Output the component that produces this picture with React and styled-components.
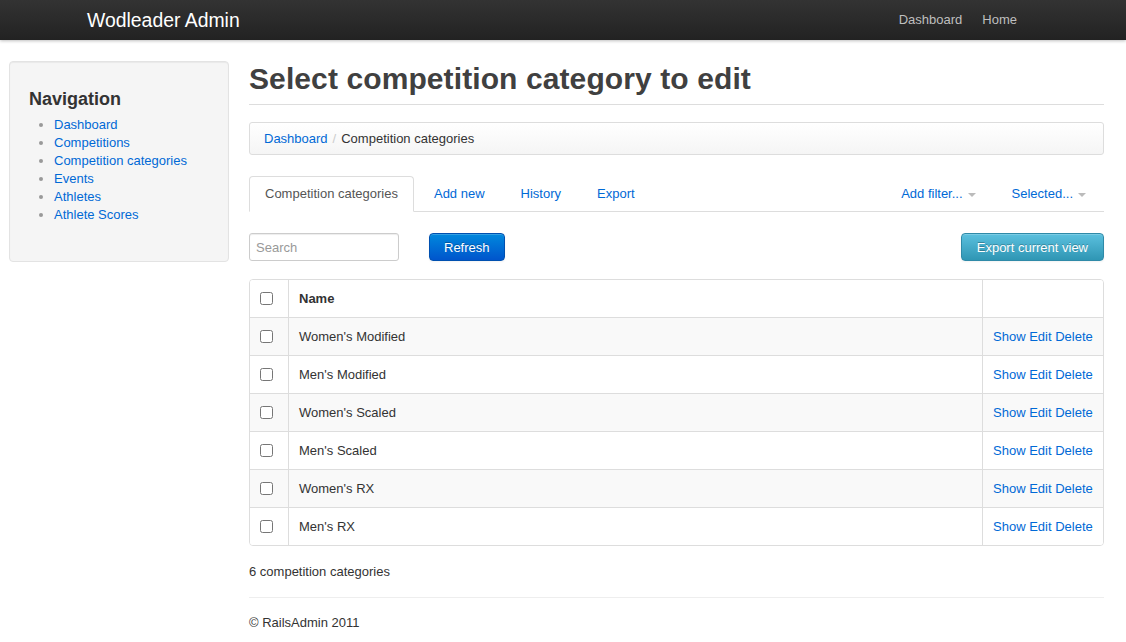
import React from 'react';
import styled, { createGlobalStyle } from 'styled-components';

const GlobalStyle = createGlobalStyle`
  body {
    margin: 0;
    background: #fff;
    font-family: "Liberation Sans", Arial, sans-serif;
    font-size: 13px;
    line-height: 18px;
    color: #333;
  }
  a { color: #0069d6; text-decoration: none; }
`;

const NavBar = styled.div`
  height: 40px;
  background: linear-gradient(to bottom, #333333, #222222);
  box-shadow: 0 1px 3px rgba(0, 0, 0, 0.25);
  display: flex;
  align-items: center;
  justify-content: space-between;
  padding: 0 109px 0 87px;
`;

const Brand = styled.span`
  color: #fff;
  font-size: 19.4px;
  line-height: 20px;
`;

const TopLinks = styled.div`
  display: flex;
  gap: 20px;
`;

const TopLink = styled.a`
  && { color: #bfbfbf; }
  font-size: 13px;
`;

const Page = styled.div`
  display: flex;
  gap: 20px;
  padding: 21px 22px 0 9px;
`;

const Sidebar = styled.div`
  width: 220px;
  flex: none;
`;

const Well = styled.div`
  background: #f5f5f5;
  border: 1px solid #e3e3e3;
  border-radius: 4px;
  box-shadow: inset 0 1px 1px rgba(0, 0, 0, 0.05);
  padding: 26px 19px 36px;
  box-sizing: border-box;
  height: 201px;
`;

const NavTitle = styled.h3`
  margin: 0 0 6px;
  font-size: 18px;
  line-height: 22px;
  font-weight: bold;
  color: #333;
`;

const NavList = styled.ul`
  margin: 0;
  padding-left: 25px;
  li::marker { color: #999; }
`;

const Main = styled.div`
  flex: 1;
  min-width: 0;
`;

const Title = styled.h1`
  margin: 0;
  padding: 0 0 7px;
  font-size: 30px;
  line-height: 36px;
  font-weight: bold;
  letter-spacing: 0.1px;
  color: #404040;
  border-bottom: 1px solid #ddd;
`;

const Breadcrumb = styled.div`
  margin-top: 17px;
  height: 33px;
  box-sizing: border-box;
  padding: 0 14px;
  display: flex;
  align-items: center;
  background: linear-gradient(to bottom, #ffffff, #f5f5f5);
  border: 1px solid #ddd;
  border-radius: 3px;
  box-shadow: inset 0 1px 0 #fff;
`;

const Divider = styled.span`
  color: #ccc;
  padding: 0 5px;
`;

const Tabs = styled.div`
  margin-top: 21px;
  display: flex;
  align-items: flex-end;
  border-bottom: 1px solid #ddd;
  height: 35px;
`;

const Tab = styled.a`
  height: ${(p) => (p.$active ? '36px' : '35px')};
  box-sizing: border-box;
  display: flex;
  align-items: center;
  padding: 0 ${(p) => (p.$active ? '15px' : '17px')};
  margin-right: ${(p) => (p.$active ? '2px' : '0')};
  margin-bottom: ${(p) => (p.$active ? '-1px' : '0')};
  border: 1px solid ${(p) => (p.$active ? '#ddd' : 'transparent')};
  border-bottom-color: ${(p) => (p.$active ? '#fff' : 'transparent')};
  border-radius: 4px 4px 0 0;
  background: #fff;
  && { color: ${(p) => (p.$active ? '#555' : '#0069d6')}; }
`;

const Spacer = styled.div`
  flex: 1;
`;

const Caret = styled.span`
  display: inline-block;
  margin-left: 5px;
  margin-top: 2px;
  border-left: 4px solid transparent;
  border-right: 4px solid transparent;
  border-top: 4px solid #bbb;
`;

const Toolbar = styled.div`
  margin-top: 21px;
  display: flex;
  align-items: center;
  gap: 30px;
  height: 28px;
`;

const Search = styled.input`
  width: 150px;
  height: 28px;
  box-sizing: border-box;
  border: 1px solid #ccc;
  border-radius: 3px;
  box-shadow: inset 0 1px 1px rgba(0, 0, 0, 0.075);
  padding: 4px 6px;
  font-family: inherit;
  font-size: 13px;
  color: #555;
  &::placeholder { color: #999; }
`;

const Button = styled.button`
  height: 28px;
  box-sizing: border-box;
  padding: 0 ${(p) => (p.$info ? '15px' : '14px')};
  font-family: inherit;
  font-size: 13px;
  color: #fff;
  text-shadow: 0 -1px 0 rgba(0, 0, 0, 0.25);
  border-radius: 4px;
  border: 1px solid ${(p) => (p.$info ? '#2f8aa8' : '#0050b0')};
  background: ${(p) =>
    p.$info
      ? 'linear-gradient(to bottom, #5bc0de, #2f96b4)'
      : 'linear-gradient(to bottom, #0088dd, #0055cc)'};
  box-shadow: inset 0 1px 0 rgba(255, 255, 255, 0.2), 0 1px 2px rgba(0, 0, 0, 0.05);
  margin-left: ${(p) => (p.$right ? 'auto' : '0')};
`;

const Table = styled.table`
  margin-top: 18px;
  width: 100%;
  border-collapse: separate;
  border-spacing: 0;
  border: 1px solid #ddd;
  border-radius: 4px;
  overflow: hidden;
`;

const Cell = styled.td`
  height: ${(p) => (p.$first ? '37px' : '38px')};
  box-sizing: border-box;
  padding: 0 10px;
  vertical-align: middle;
  border-top: ${(p) => (p.$first ? 'none' : '1px solid #ddd')};
  border-left: ${(p) => (p.$edge ? 'none' : '1px solid #ddd')};
  background: ${(p) => (p.$striped ? '#f9f9f9' : '#fff')};
  width: ${(p) => p.$w || 'auto'};
  font-weight: ${(p) => (p.$head ? 'bold' : 'normal')};
  white-space: nowrap;
`;

const Check = styled.input`
  margin: 0;
  width: 13px;
  height: 13px;
  display: block;
`;

const Count = styled.p`
  margin: 17px 0 0;
  line-height: 18px;
`;

const Rule = styled.hr`
  margin: 16px 0 0;
  border: none;
  border-top: 1px solid #eee;
`;

const Footer = styled.p`
  margin: 16px 0 0;
`;

const rows = [
  "Women's Modified",
  "Men's Modified",
  "Women's Scaled",
  "Men's Scaled",
  "Women's RX",
  "Men's RX",
];

const navItems = ['Dashboard', 'Competitions', 'Competition categories', 'Events', 'Athletes', 'Athlete Scores'];

export default function App() {
  return (
    <>
      <GlobalStyle />
      <NavBar>
        <Brand>Wodleader Admin</Brand>
        <TopLinks>
          <TopLink href="#">Dashboard</TopLink>
          <TopLink href="#">Home</TopLink>
        </TopLinks>
      </NavBar>
      <Page>
        <Sidebar>
          <Well>
            <NavTitle>Navigation</NavTitle>
            <NavList>
              {navItems.map((n) => (
                <li key={n}><a href="#">{n}</a></li>
              ))}
            </NavList>
          </Well>
        </Sidebar>
        <Main>
          <Title>Select competition category to edit</Title>
          <Breadcrumb>
            <a href="#">Dashboard</a>
            <Divider>/</Divider>
            <span>Competition categories</span>
          </Breadcrumb>
          <Tabs>
            <Tab $active>Competition categories</Tab>
            <Tab href="#">Add new</Tab>
            <Tab href="#">History</Tab>
            <Tab href="#">Export</Tab>
            <Spacer />
            <Tab href="#">Add filter...<Caret /></Tab>
            <Tab href="#">Selected...<Caret /></Tab>
          </Tabs>
          <Toolbar>
            <Search placeholder="Search" />
            <Button>Refresh</Button>
            <Button $info $right>Export current view</Button>
          </Toolbar>
          <Table>
            <tbody>
              <tr>
                <Cell $first $edge $w="38px"><Check type="checkbox" /></Cell>
                <Cell $first $head>Name</Cell>
                <Cell $first $w="121px" />
              </tr>
              {rows.map((r, i) => (
                <tr key={r}>
                  <Cell $edge $striped={i % 2 === 0}><Check type="checkbox" /></Cell>
                  <Cell $striped={i % 2 === 0}>{r}</Cell>
                  <Cell $striped={i % 2 === 0}>
                    <a href="#">Show</a> <a href="#">Edit</a> <a href="#">Delete</a>
                  </Cell>
                </tr>
              ))}
            </tbody>
          </Table>
          <Count>6 competition categories</Count>
          <Rule />
          <Footer>© RailsAdmin 2011</Footer>
        </Main>
      </Page>
    </>
  );
}
